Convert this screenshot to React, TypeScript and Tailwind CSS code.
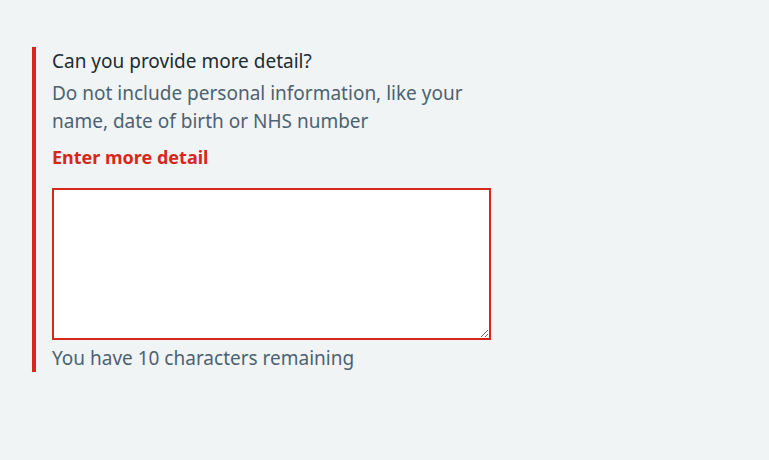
export default function App() {
  return (
    <div className="min-h-[460px] w-full bg-[#f0f4f5] pt-[47px] pl-[32px]" style={{ fontFamily: '"Noto Sans", Arial, sans-serif' }}>
      <div className="border-l-4 border-[#d5281b] pl-4 w-[459px]">
        <label className="block text-[19px] leading-[28px] text-[#212b32] mb-1">Can you provide more detail?</label>
        <div className="text-[19px] leading-[28px] text-[#4c6272] mb-2 whitespace-nowrap">
          Do not include personal information, like your<br />name, date of birth or NHS number
        </div>
        <div className="text-[18px] leading-[28px] font-bold text-[#d5281b] mb-[17px]">Enter more detail</div>
        <textarea className="block w-[439px] h-[152px] border-2 border-[#d5281b] bg-white p-1 outline-none resize-y" />
        <div className="text-[19px] leading-[28px] text-[#4c6272] pt-[4px]">You have 10 characters remaining</div>
      </div>
    </div>
  );
}
